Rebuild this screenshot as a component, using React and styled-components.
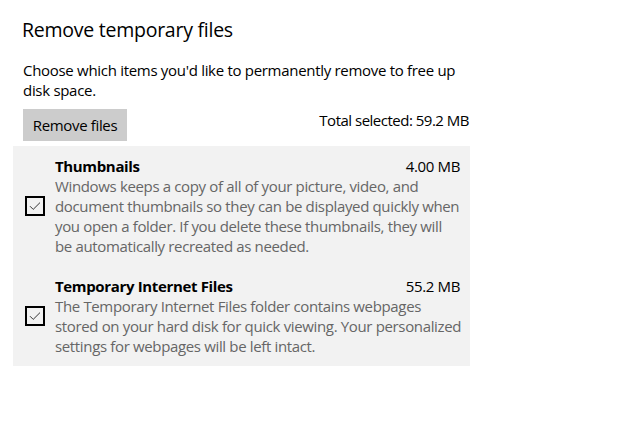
import React from "react";
import styled, { createGlobalStyle } from "styled-components";

const Global = createGlobalStyle`
  html, body { margin: 0; padding: 0; background: #fff; }
  body { font-family: "Open Sans", "Noto Sans", sans-serif; color: #000; }
`;

const Page = styled.div`
  width: 635px;
  height: 423px;
  box-sizing: border-box;
  padding: 16px 0 0 0;
`;

const Title = styled.h1`
  margin: 0 0 0 22px;
  font-size: 19.5px;
  line-height: 27px;
  font-weight: 400;
  letter-spacing: -0.25px;
`;

const Description = styled.p`
  margin: 17px 0 0 23px;
  width: 460px;
  font-size: 15px;
  line-height: 20px;
  letter-spacing: -0.3px;
  white-space: nowrap;
`;

const ActionRow = styled.div`
  margin: 9px 0 0 23px;
  width: 446px;
  display: flex;
  justify-content: space-between;
  align-items: flex-start;
`;

const Button = styled.button`
  height: 32px;
  width: 104px;
  border: none;
  background: #cccccc;
  font-family: inherit;
  font-size: 15px;
  letter-spacing: -0.35px;
  color: #000;
  padding: 0;
`;

const Total = styled.span`
  font-size: 15px;
  line-height: 20px;
  letter-spacing: -0.5px;
  margin-top: 1px;
`;

const Panel = styled.div`
  margin: 5px 0 0 13px;
  width: 457px;
  box-sizing: border-box;
  background: #f2f2f2;
  padding: 10px 10px 10px 12px;
  display: flex;
  flex-direction: column;
  gap: 20px;
`;

const Item = styled.div`
  display: flex;
  align-items: center;
  gap: 10px;
`;

const Check = styled.div`
  flex: 0 0 20px;
  width: 20px;
  height: 20px;
  box-sizing: border-box;
  border: 2px solid #000;
  display: flex;
  align-items: center;
  justify-content: center;
`;

const Body = styled.div`
  flex: 1;
  min-width: 0;
`;

const Head = styled.div`
  display: flex;
  justify-content: space-between;
  font-size: 15px;
  line-height: 20px;
  letter-spacing: -0.35px;
`;

const Name = styled.span`
  font-weight: 700;
`;

const Text = styled.div`
  font-size: 15px;
  line-height: 20px;
  color: #666;
  letter-spacing: -0.35px;
  white-space: nowrap;
`;

const CheckMark = () => (
  <svg width="12" height="10" viewBox="0 0 12 10">
    <path d="M1 5.2 L4.2 8.4 L11 1.6" fill="none" stroke="#333" strokeWidth="1" />
  </svg>
);

const items = [
  {
    name: "Thumbnails",
    size: "4.00 MB",
    lines: [
      "Windows keeps a copy of all of your picture, video, and",
      "document thumbnails so they can be displayed quickly when",
      "you open a folder. If you delete these thumbnails, they will",
      "be automatically recreated as needed.",
    ],
  },
  {
    name: "Temporary Internet Files",
    size: "55.2 MB",
    lines: [
      "The Temporary Internet Files folder contains webpages",
      "stored on your hard disk for quick viewing. Your personalized",
      "settings for webpages will be left intact.",
    ],
  },
];

export default function App() {
  return (
    <Page>
      <Global />
      <Title>Remove temporary files</Title>
      <Description>
        Choose which items you'd like to permanently remove to free up
        <br />
        disk space.
      </Description>
      <ActionRow>
        <Button>Remove files</Button>
        <Total>Total selected: 59.2 MB</Total>
      </ActionRow>
      <Panel>
        {items.map((it) => (
          <Item key={it.name}>
            <Check>
              <CheckMark />
            </Check>
            <Body>
              <Head>
                <Name>{it.name}</Name>
                <span>{it.size}</span>
              </Head>
              <Text>
                {it.lines.map((l, i) => (
                  <div key={i}>{l}</div>
                ))}
              </Text>
            </Body>
          </Item>
        ))}
      </Panel>
    </Page>
  );
}
